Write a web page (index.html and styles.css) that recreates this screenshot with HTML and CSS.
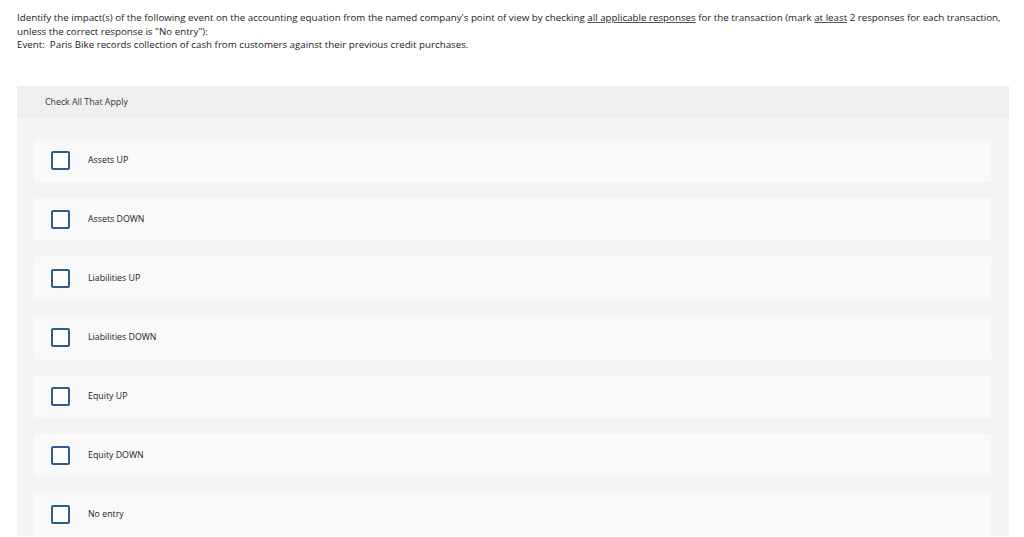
FILE: index.html
```html
<!DOCTYPE html>
<html>
<head>
<meta charset="utf-8">
<link rel="stylesheet" href="styles.css">
</head>
<body>
<div class="prompt">
<p>Identify the impact(s) of the following event on the accounting equation from the named company's point of view by checking <u>all applicable responses</u> for the transaction (mark <u>at least</u> 2 responses for each transaction, unless the correct response is "No entry"):</p>
<p>Event:&nbsp; Paris Bike records collection of cash from customers against their previous credit purchases.</p>
</div>
<div class="panel">
<div class="panel-head">Check All That Apply</div>
<div class="panel-body">
<label class="opt"><span class="box"></span><span class="lbl">Assets UP</span></label>
<label class="opt"><span class="box"></span><span class="lbl">Assets DOWN</span></label>
<label class="opt"><span class="box"></span><span class="lbl">Liabilities UP</span></label>
<label class="opt"><span class="box"></span><span class="lbl">Liabilities DOWN</span></label>
<label class="opt"><span class="box"></span><span class="lbl">Equity UP</span></label>
<label class="opt"><span class="box"></span><span class="lbl">Equity DOWN</span></label>
<label class="opt"><span class="box"></span><span class="lbl">No entry</span></label>
</div>
</div>
</body>
</html>
```
FILE: styles.css
```css
html, body { margin: 0; padding: 0; background: #fff; }
body {
  font-family: "Open Sans", "Liberation Sans", sans-serif;
  color: #222;
  font-size: 9.75px;
}
.prompt {
  padding: 11px 0 0 17px;
  width: 990px;
  line-height: 13.5px;
}
.prompt p { margin: 0; }
.prompt u { text-decoration-color: #555; }
.panel {
  margin: 34px 15px 0 17px;
  background: #f4f4f4;
}
.panel-head {
  background: #efefef;
  height: 32px;
  display: flex;
  align-items: center;
  padding-left: 28px;
  font-size: 8.8px;
  color: #333;
}
.panel-body {
  padding: 21px 18px 0 17px;
  display: flex;
  flex-direction: column;
  gap: 16px;
}
.opt {
  background: #f9f9f9;
  height: 43px;
  display: flex;
  align-items: center;
  padding-left: 17px;
}
.box {
  width: 15px;
  height: 15px;
  border: 2px solid #2c5d8d;
  border-radius: 2px;
  background: #fff;
  flex: none;
}
.lbl {
  margin-left: 18px;
  font-size: 8.8px;
  color: #222;
}
```
